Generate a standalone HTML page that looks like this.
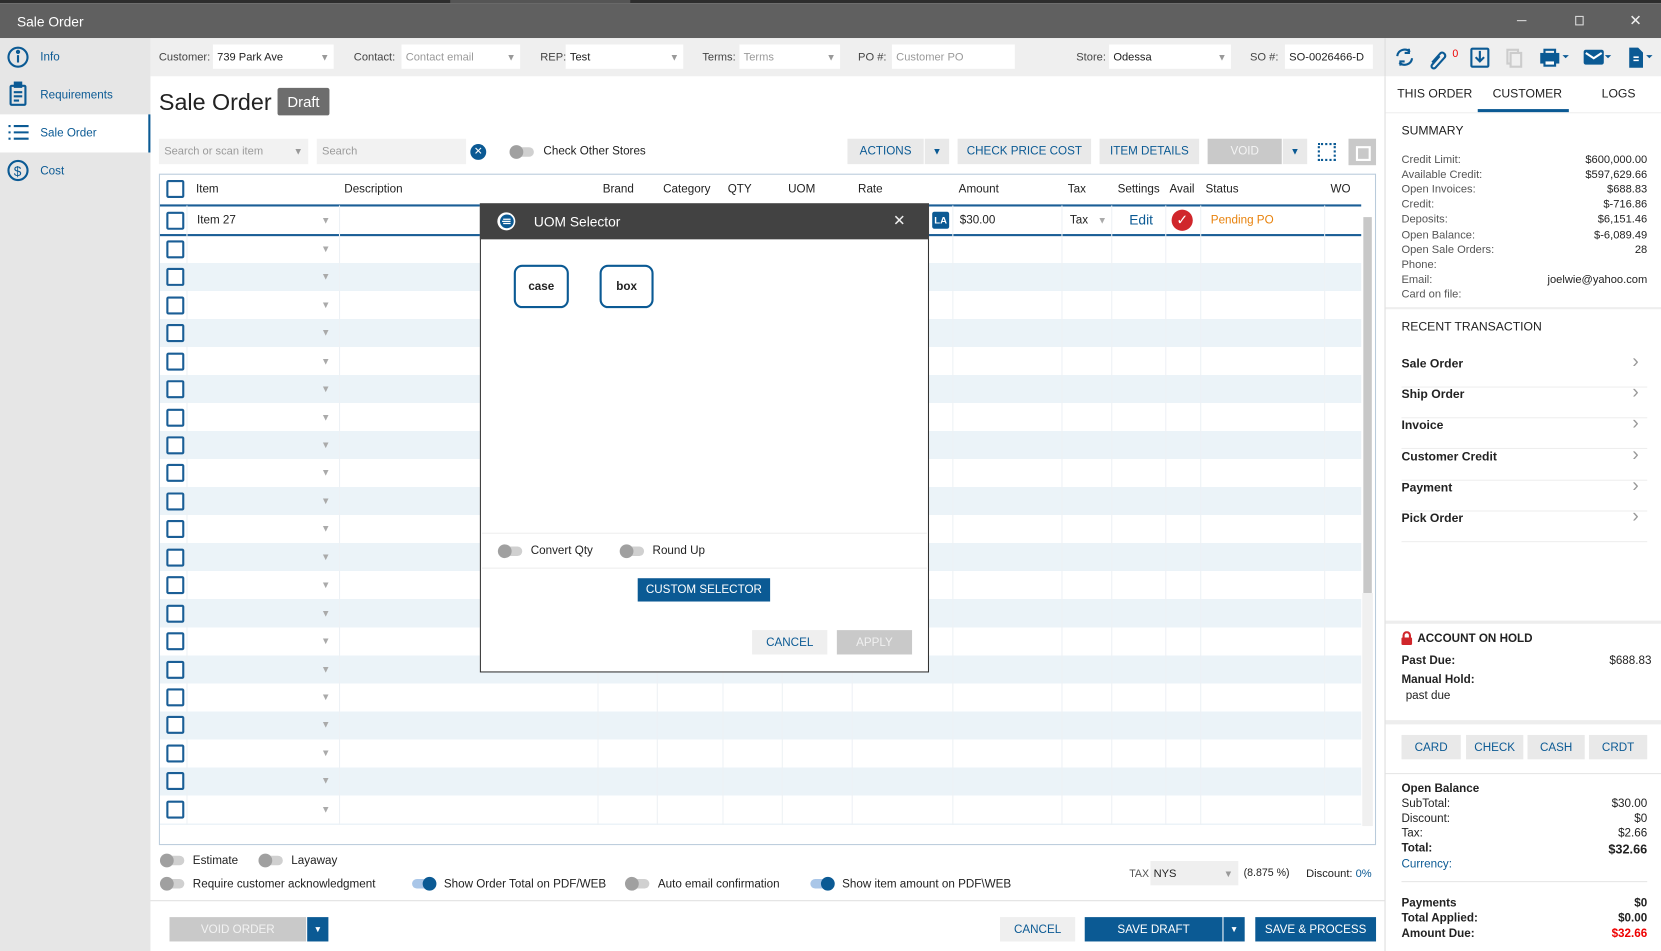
<!DOCTYPE html>
<html><head><meta charset="utf-8"><style>
*{box-sizing:border-box;margin:0;padding:0}
html,body{width:1661px;height:951px;overflow:hidden;background:#fff}
#w{position:absolute;left:0;top:0;width:1568px;height:898px;transform:scale(1.05931,1.05902);transform-origin:0 0;font-family:"Liberation Sans",sans-serif;font-size:11px;color:#222}
.a{position:absolute}
.blue{color:#0b5a94}
.fld{position:absolute;background:#fff;height:23px;top:42px;padding:0 4px;line-height:24px;font-size:10.5px}
.ph{color:#9a9a9a}
.dd{position:absolute;right:4px;top:0;color:#999;font-size:9px}
.lbl{position:absolute;top:48px;font-size:10.5px;color:#444}
.btn{position:absolute;background:#e9e9e9;color:#0b5a94;text-align:center;font-size:11px}
.cb{position:absolute;left:157px;width:17px;height:17px;border:2px solid #1a5e96;border-radius:2px;background:#fff}
.ar{position:absolute;left:303px;color:#aaa;font-size:9px}
.tg{position:absolute;width:22px;height:9px;border-radius:5px;background:#d0d0d0}
.tg:after{content:"";position:absolute;left:-1px;top:-2px;width:13px;height:13px;border-radius:50%;background:#a0a0a0}
.tg.on{background:#a9c6e8}.tg.on:after{left:10px;background:#0b5a94}
.sr{position:absolute;left:1323px;width:232px;font-size:10.5px;color:#555;height:14px}
.sr b{position:absolute;right:0;font-weight:normal;color:#222}
.rt{position:absolute;left:1323px;width:232px;font-weight:bold;font-size:11.5px;border-bottom:1px solid #eee;height:29px;line-height:14px}
.rt:after{content:"›";position:absolute;right:8px;top:-3px;font-size:18px;color:#999;font-weight:normal}
.ob{position:absolute;left:1323px;width:232px;font-size:11px;height:14px}
.ob b{position:absolute;right:0}
.vl{position:absolute;top:194px;height:585px;width:1px;background:#edf1f5}
.hd{position:absolute;top:173px;font-size:11px}
</style></head><body><div id="w">
<div class="a" style="left:0;top:0;width:1568px;height:3px;background:#2d2d2d"></div>
<div class="a" style="left:425px;top:0;width:170px;height:3px;background:#555"></div>
<div class="a" style="left:0;top:3px;width:1568px;height:33px;background:#606060"></div>
<div class="a" style="left:16px;top:13px;color:#fff;font-size:13px">Sale Order</div>
<div class="a" style="left:1432px;top:19px;width:9px;height:1px;background:#ddd"></div>
<div class="a" style="left:1487px;top:15px;width:8px;height:9px;border:1px solid #ddd"></div>
<div class="a" style="left:1538px;top:11px;color:#eee;font-size:14px">✕</div>
<div class="a" style="left:0;top:36px;width:142px;height:862px;background:#e6e6e6"></div>
<div class="a" style="left:0;top:108px;width:142px;height:36px;background:#fff;border-right:2px solid #0b5a94"></div>
<svg class="a" style="left:6px;top:43px" width="22" height="130" viewBox="0 0 22 130" fill="none" stroke="#0b5a94" stroke-width="2">
<circle cx="11" cy="11" r="9"/><line x1="11" y1="9" x2="11" y2="16"/><circle cx="11" cy="6" r="1" fill="#0b5a94"/>
<rect x="4" y="38" width="14" height="18" rx="1"/><rect x="8" y="35" width="6" height="4" fill="#0b5a94"/><line x1="7" y1="44" x2="15" y2="44"/><line x1="7" y1="48" x2="15" y2="48"/><line x1="7" y1="52" x2="12" y2="52"/>
<line x1="2" y1="76" x2="4" y2="76"/><line x1="7" y1="76" x2="21" y2="76"/><line x1="2" y1="82" x2="4" y2="82"/><line x1="7" y1="82" x2="21" y2="82"/><line x1="2" y1="88" x2="4" y2="88"/><line x1="7" y1="88" x2="21" y2="88"/>
<circle cx="11" cy="118" r="9"/><text x="7" y="123" font-size="13" fill="#0b5a94" stroke="none" font-family="Liberation Sans">$</text>
</svg>
<div class="a blue" style="left:38px;top:48px">Info</div>
<div class="a blue" style="left:38px;top:84px">Requirements</div>
<div class="a blue" style="left:38px;top:120px">Sale Order</div>
<div class="a blue" style="left:38px;top:156px">Cost</div>
<div class="a" style="left:142px;top:36px;width:1165px;height:36px;background:#efefef"></div>
<div class="lbl" style="left:150px">Customer:</div><div class="fld" style="left:201px;width:114px">739 Park Ave<span class="dd">▼</span></div>
<div class="lbl" style="left:334px">Contact:</div><div class="fld ph" style="left:379px;width:112px">Contact email<span class="dd">▼</span></div>
<div class="lbl" style="left:510px">REP:</div><div class="fld" style="left:534px;width:111px">Test<span class="dd">▼</span></div>
<div class="lbl" style="left:663px">Terms:</div><div class="fld ph" style="left:698px;width:95px">Terms<span class="dd">▼</span></div>
<div class="lbl" style="left:810px">PO #:</div><div class="fld ph" style="left:842px;width:116px">Customer PO</div>
<div class="lbl" style="left:1016px">Store:</div><div class="fld" style="left:1047px;width:115px">Odessa<span class="dd">▼</span></div>
<div class="lbl" style="left:1180px">SO #:</div><div class="fld" style="left:1213px;width:83px">SO-0026466-D</div>
<div class="a" style="left:1307px;top:36px;width:261px;height:36px;background:#efefef;border-left:1px solid #ddd"></div>
<svg class="a" style="left:1315px;top:42px" width="250" height="24" viewBox="0 0 250 24" fill="none" stroke="#0b5a94" stroke-width="2">
<path d="M4 11a7 7 0 0 1 12-4M18 13a7 7 0 0 1-12 4"/><path d="M15 4v4h-4M7 20v-4h4"/>
<path d="M37 17l8-9a3 3 0 0 1 4 4l-9 10a2 2 0 0 1-3-3l7-8"/>
<text x="56" y="12" fill="#e00" stroke="none" font-size="10" font-family="Liberation Sans">0</text>
<rect x="74" y="4" width="16" height="17" rx="1"/><path d="M82 6v10M78 12l4 4 4-4"/>
<rect x="108" y="5" width="10" height="13" stroke="#ccc"/><rect x="111" y="8" width="10" height="13" stroke="#ccc" fill="#efefef"/>
<rect x="140" y="9" width="16" height="8" fill="#0b5a94"/><rect x="143" y="5" width="10" height="4"/><rect x="143" y="15" width="10" height="5" fill="#fff"/><path d="M160 10l3 3 3-3" fill="#0b5a94" stroke="none"/>
<rect x="181" y="6" width="17" height="12" rx="1" fill="#0b5a94"/><path d="M182 8l7.5 5 7.5-5" stroke="#fff"/><path d="M200 10l3 3 3-3" fill="#0b5a94" stroke="none"/>
<path d="M224 4h7l4 4v13h-11z" fill="#0b5a94"/><path d="M227 12h5M227 15h5" stroke="#fff" stroke-width="1.5"/><path d="M239 10l3 3 3-3" fill="#0b5a94" stroke="none"/>
</svg>
<div class="a" style="left:150px;top:84px;font-size:22px;color:#222">Sale Order</div>
<div class="a" style="left:262px;top:83px;width:49px;height:26px;background:#6d6d6d;color:#fff;font-size:14px;text-align:center;line-height:26px;border-radius:2px">Draft</div>
<div class="a ph" style="left:150px;top:131px;width:141px;height:24px;background:#f2f2f2;line-height:25px;padding-left:5px;font-size:10.5px">Search or scan item<span class="dd" style="right:5px">▼</span></div>
<div class="a ph" style="left:299px;top:131px;width:141px;height:24px;background:#f2f2f2;line-height:25px;padding-left:5px;font-size:10.5px">Search</div>
<div class="a" style="left:444px;top:136px;width:15px;height:15px;border-radius:50%;background:#0b5a94;color:#fff;font-size:10px;text-align:center;line-height:15px">✕</div>
<div class="tg" style="left:482px;top:139px"></div>
<div class="a" style="left:513px;top:137px">Check Other Stores</div>
<div class="btn" style="left:800px;top:131px;width:72px;height:24px;line-height:25px">ACTIONS</div>
<div class="btn" style="left:873px;top:131px;width:23px;height:24px;line-height:24px;font-size:9px">▼</div>
<div class="btn" style="left:904px;top:131px;width:126px;height:24px;line-height:25px">CHECK PRICE COST</div>
<div class="btn" style="left:1038px;top:131px;width:94px;height:24px;line-height:25px">ITEM DETAILS</div>
<div class="btn" style="left:1140px;top:131px;width:70px;height:24px;line-height:25px;background:#c9c9c9;color:#f4f4f4">VOID</div>
<div class="btn" style="left:1211px;top:131px;width:23px;height:24px;line-height:24px;font-size:9px">▼</div>
<div class="a" style="left:1244px;top:135px;width:17px;height:17px;border:2px dotted #0b5a94"></div>
<div class="a" style="left:1273px;top:131px;width:26px;height:25px;background:#c9c9c9"><div class="a" style="left:7px;top:7px;width:14px;height:14px;border:2px solid #fff"></div></div>
<div class="a" style="left:150px;top:164px;width:1149px;height:634px;border:1px solid #b9cbdb;background:#fff"></div>
<div class="a" style="left:151px;top:222px;width:1134px;height:557px;background:repeating-linear-gradient(#fff 0 26.45px,#ebf3f8 26.45px 52.9px)"></div>
<div class="a" style="left:151px;top:193px;width:1134px;height:2px;background:#1a5e96"></div>
<div class="a" style="left:151px;top:221px;width:1134px;height:2px;background:#1a5e96"></div>
<div class="vl" style="left:176px"></div><div class="vl" style="left:320px"></div><div class="vl" style="left:564px"></div><div class="vl" style="left:620px"></div><div class="vl" style="left:682px"></div><div class="vl" style="left:738px"></div><div class="vl" style="left:804px"></div><div class="vl" style="left:899px"></div><div class="vl" style="left:1002px"></div><div class="vl" style="left:1049px"></div><div class="vl" style="left:1100px"></div><div class="vl" style="left:1133px"></div><div class="vl" style="left:1250px"></div>
<div class="a" style="left:1287px;top:205px;width:8px;height:355px;background:#c8c8c8"></div>
<div class="a" style="left:1286px;top:560px;width:10px;height:220px;background:#f0f0f0"></div>
<div class="cb" style="top:170px"></div>
<div class="hd" style="left:185px">Item</div><div class="hd" style="left:325px">Description</div><div class="hd" style="left:569px">Brand</div><div class="hd" style="left:626px">Category</div><div class="hd" style="left:687px">QTY</div><div class="hd" style="left:744px">UOM</div><div class="hd" style="left:810px">Rate</div><div class="hd" style="left:905px">Amount</div><div class="hd" style="left:1008px">Tax</div><div class="hd" style="left:1055px">Settings</div><div class="hd" style="left:1104px">Avail</div><div class="hd" style="left:1138px">Status</div><div class="hd" style="left:1256px">WO</div>
<div class="cb" style="top:200px"></div><div class="a" style="left:186px;top:202px">Item 27</div><div class="ar" style="top:203px">▼</div>
<div class="a" style="left:880px;top:200px;width:16px;height:16px;background:#0b5a94;color:#fff;font-size:9px;font-weight:bold;text-align:center;line-height:16px;border-radius:2px">LA</div>
<div class="a" style="left:906px;top:202px">$30.00</div>
<div class="a" style="left:1010px;top:202px">Tax</div><div class="a" style="left:1036px;top:203px;color:#aaa;font-size:9px">▼</div>
<div class="a blue" style="left:1066px;top:200px;font-size:13px">Edit</div>
<div class="a" style="left:1106px;top:198px;width:20px;height:20px;border-radius:50%;background:#d0262b;color:#fff;text-align:center;line-height:20px;font-size:13px">✓</div>
<div class="a" style="left:1143px;top:202px;color:#e8820c">Pending PO</div>
<div class="cb" style="top:227px"></div><div class="ar" style="top:230px">▼</div>
<div class="cb" style="top:253px"></div><div class="ar" style="top:256px">▼</div>
<div class="cb" style="top:280px"></div><div class="ar" style="top:283px">▼</div>
<div class="cb" style="top:306px"></div><div class="ar" style="top:309px">▼</div>
<div class="cb" style="top:333px"></div><div class="ar" style="top:336px">▼</div>
<div class="cb" style="top:359px"></div><div class="ar" style="top:362px">▼</div>
<div class="cb" style="top:386px"></div><div class="ar" style="top:389px">▼</div>
<div class="cb" style="top:412px"></div><div class="ar" style="top:415px">▼</div>
<div class="cb" style="top:438px"></div><div class="ar" style="top:441px">▼</div>
<div class="cb" style="top:465px"></div><div class="ar" style="top:468px">▼</div>
<div class="cb" style="top:491px"></div><div class="ar" style="top:494px">▼</div>
<div class="cb" style="top:518px"></div><div class="ar" style="top:521px">▼</div>
<div class="cb" style="top:544px"></div><div class="ar" style="top:547px">▼</div>
<div class="cb" style="top:571px"></div><div class="ar" style="top:574px">▼</div>
<div class="cb" style="top:597px"></div><div class="ar" style="top:600px">▼</div>
<div class="cb" style="top:624px"></div><div class="ar" style="top:627px">▼</div>
<div class="cb" style="top:650px"></div><div class="ar" style="top:653px">▼</div>
<div class="cb" style="top:676px"></div><div class="ar" style="top:679px">▼</div>
<div class="cb" style="top:703px"></div><div class="ar" style="top:706px">▼</div>
<div class="cb" style="top:729px"></div><div class="ar" style="top:732px">▼</div>
<div class="cb" style="top:756px"></div><div class="ar" style="top:759px">▼</div>
<div class="a" style="left:151px;top:779px;width:1134px;height:18px;background:#fff"></div>
<div class="a" style="left:453px;top:192px;width:424px;height:443px;border:1px solid #333;background:#fff"></div>
<div class="a" style="left:453px;top:192px;width:424px;height:34px;background:#424242"></div>
<svg class="a" style="left:469px;top:200px" width="18" height="18" viewBox="0 0 18 18"><circle cx="9" cy="9" r="8.5" fill="#fff"/><circle cx="9.5" cy="9" r="6.5" fill="#0b5a94"/><path d="M6 7h7M5 9h8M6 11h7" stroke="#fff" stroke-width="1.2"/></svg>
<div class="a" style="left:504px;top:202px;color:#fff;font-size:13px">UOM Selector</div>
<div class="a" style="left:843px;top:200px;color:#eee;font-size:14px">✕</div>
<div class="a" style="left:485px;top:250px;width:52px;height:41px;border:2px solid #0b5a94;border-radius:8px;text-align:center;line-height:38px;font-weight:bold;font-size:11px">case</div>
<div class="a" style="left:566px;top:250px;width:51px;height:41px;border:2px solid #0b5a94;border-radius:8px;text-align:center;line-height:38px;font-weight:bold;font-size:11px">box</div>
<div class="a" style="left:455px;top:503px;width:420px;height:1px;background:#eee"></div>
<div class="a" style="left:455px;top:536px;width:420px;height:1px;background:#eee"></div>
<div class="tg" style="left:471px;top:516px"></div><div class="a" style="left:501px;top:514px">Convert Qty</div>
<div class="tg" style="left:586px;top:516px"></div><div class="a" style="left:616px;top:514px">Round Up</div>
<div class="a" style="left:602px;top:546px;width:125px;height:22px;background:#0b5a94;color:#fff;text-align:center;line-height:23px">CUSTOM SELECTOR</div>
<div class="btn" style="left:710px;top:595px;width:71px;height:23px;line-height:24px;background:#efefef">CANCEL</div>
<div class="btn" style="left:790px;top:595px;width:71px;height:23px;line-height:24px;background:#c9c9c9;color:#f0f0f0">APPLY</div>
<div class="tg" style="left:152px;top:808px"></div><div class="a" style="left:182px;top:807px">Estimate</div>
<div class="tg" style="left:245px;top:808px"></div><div class="a" style="left:275px;top:807px">Layaway</div>
<div class="tg" style="left:152px;top:830px"></div><div class="a" style="left:182px;top:829px">Require customer acknowledgment</div>
<div class="tg on" style="left:389px;top:830px"></div><div class="a" style="left:419px;top:829px">Show Order Total on PDF/WEB</div>
<div class="tg" style="left:591px;top:830px"></div><div class="a" style="left:621px;top:829px">Auto email confirmation</div>
<div class="tg on" style="left:765px;top:830px"></div><div class="a" style="left:795px;top:829px">Show item amount on PDF\WEB</div>
<div class="a" style="left:1066px;top:820px;font-size:10px;color:#555">TAX</div>
<div class="a" style="left:1086px;top:813px;width:83px;height:23px;background:#efefef;line-height:24px;padding-left:3px;font-size:10.5px">NYS<span class="dd" style="right:5px">▼</span></div>
<div class="a" style="left:1174px;top:819px;font-size:10px">(8.875 %)</div>
<div class="a" style="left:1233px;top:819px;font-size:10.5px">Discount: <span class="blue">0%</span></div>
<div class="a" style="left:142px;top:850px;width:1165px;height:1px;background:#e0e0e0"></div>
<div class="btn" style="left:160px;top:866px;width:129px;height:23px;line-height:24px;background:#c9c9c9;color:#f2f2f2">VOID ORDER</div>
<div class="btn" style="left:290px;top:866px;width:20px;height:23px;line-height:23px;background:#0b5a94;color:#fff;font-size:8px">▼</div>
<div class="btn" style="left:944px;top:866px;width:71px;height:23px;line-height:24px;background:#efefef">CANCEL</div>
<div class="btn" style="left:1024px;top:866px;width:130px;height:23px;line-height:24px;background:#0b5a94;color:#fff">SAVE DRAFT</div>
<div class="btn" style="left:1155px;top:866px;width:20px;height:23px;line-height:23px;background:#0b5a94;color:#fff;font-size:8px">▼</div>
<div class="btn" style="left:1185px;top:866px;width:114px;height:23px;line-height:24px;background:#0b5a94;color:#fff">SAVE &amp; PROCESS</div>
<div class="a" style="left:1307px;top:72px;width:1px;height:826px;background:#ddd"></div>
<div class="a" style="left:1319px;top:83px;font-size:11.5px">THIS ORDER</div>
<div class="a" style="left:1409px;top:83px;font-size:11.5px">CUSTOMER</div>
<div class="a" style="left:1512px;top:83px;font-size:11.5px">LOGS</div>
<div class="a" style="left:1395px;top:103px;width:86px;height:3px;background:#0b5a94"></div>
<div class="a" style="left:1308px;top:106px;width:260px;height:1px;background:#eee"></div>
<div class="a" style="left:1323px;top:118px;font-size:11.5px">SUMMARY</div>
<div class="sr" style="top:145px">Credit Limit:<b>$600,000.00</b></div>
<div class="sr" style="top:159px">Available Credit:<b>$597,629.66</b></div>
<div class="sr" style="top:173px">Open Invoices:<b>$688.83</b></div>
<div class="sr" style="top:187px">Credit:<b>$-716.86</b></div>
<div class="sr" style="top:201px">Deposits:<b>$6,151.46</b></div>
<div class="sr" style="top:216px">Open Balance:<b>$-6,089.49</b></div>
<div class="sr" style="top:230px">Open Sale Orders:<b>28</b></div>
<div class="sr" style="top:244px">Phone:</div>
<div class="sr" style="top:258px">Email:<b>joelwie@yahoo.com</b></div>
<div class="sr" style="top:272px">Card on file:</div>
<div class="a" style="left:1308px;top:290px;width:260px;height:2px;background:#eee"></div>
<div class="a" style="left:1323px;top:303px;font-size:11.5px">RECENT TRANSACTION</div>
<div class="rt" style="top:337px">Sale Order</div>
<div class="rt" style="top:366px">Ship Order</div>
<div class="rt" style="top:395px">Invoice</div>
<div class="rt" style="top:425px">Customer Credit</div>
<div class="rt" style="top:454px">Payment</div>
<div class="rt" style="top:483px">Pick Order</div>
<div class="a" style="left:1308px;top:586px;width:260px;height:3px;background:#ededed"></div>
<svg class="a" style="left:1322px;top:596px" width="12" height="13" viewBox="0 0 12 13"><path d="M3 6V4a3 3 0 0 1 6 0v2" stroke="#d0262b" stroke-width="2" fill="none"/><rect x="1" y="6" width="10" height="7" rx="1" fill="#d0262b"/></svg>
<div class="a" style="left:1338px;top:597px;font-size:11px;font-weight:bold">ACCOUNT ON HOLD</div>
<div class="ob" style="top:618px;font-weight:bold;width:236px">Past Due:<b style="font-weight:normal">$688.83</b></div>
<div class="ob" style="top:636px;font-weight:bold">Manual Hold:</div>
<div class="ob" style="top:651px;left:1327px">past due</div>
<div class="a" style="left:1308px;top:680px;width:260px;height:4px;background:#ededed"></div>
<div class="btn" style="left:1323px;top:694px;width:56px;height:23px;line-height:24px">CARD</div>
<div class="btn" style="left:1384px;top:694px;width:54px;height:23px;line-height:24px">CHECK</div>
<div class="btn" style="left:1442px;top:694px;width:54px;height:23px;line-height:24px">CASH</div>
<div class="btn" style="left:1500px;top:694px;width:55px;height:23px;line-height:24px">CRDT</div>
<div class="a" style="left:1308px;top:730px;width:260px;height:1px;background:#e5e5e5"></div>
<div class="ob" style="top:739px;font-weight:bold">Open Balance</div>
<div class="ob" style="top:753px">SubTotal:<b style="font-weight:normal">$30.00</b></div>
<div class="ob" style="top:767px">Discount:<b style="font-weight:normal">$0</b></div>
<div class="ob" style="top:781px">Tax:<b style="font-weight:normal">$2.66</b></div>
<div class="ob" style="top:795px;font-weight:bold">Total:<b style="font-size:12px">$32.66</b></div>
<div class="ob blue" style="top:810px">Currency:</div>
<div class="a" style="left:1323px;top:832px;width:232px;height:1px;background:#e5e5e5"></div>
<div class="ob" style="top:847px;font-weight:bold">Payments<b>$0</b></div>
<div class="ob" style="top:861px;font-weight:bold">Total Applied:<b>$0.00</b></div>
<div class="ob" style="top:876px;font-weight:bold">Amount Due:<b style="color:#e00">$32.66</b></div>
</div></body></html>
